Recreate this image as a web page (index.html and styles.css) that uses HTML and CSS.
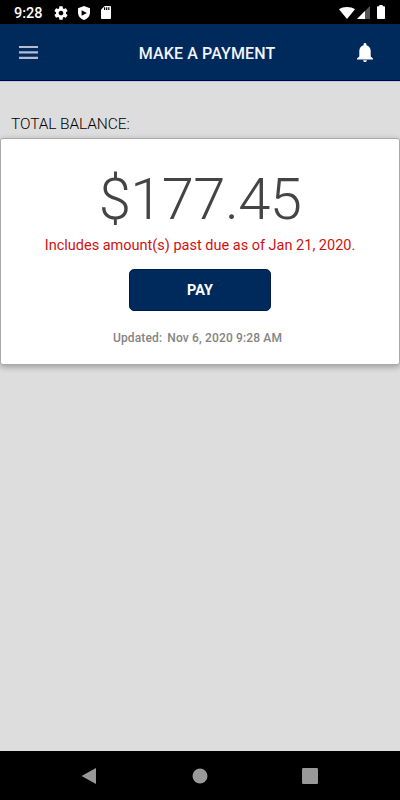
FILE: index.html
```html
<!DOCTYPE html>
<html lang="en">
<head>
    <meta charset="UTF-8">
    <meta name="viewport" content="width=device-width, initial-scale=1.0">
    <title>Make a Payment</title>
    <link rel="stylesheet" href="styles.css">
</head>
<body>

<!-- Status bar -->
<div class="status-bar">
    <span class="clock">9:28</span>
    <svg class="gear" viewBox="0 0 24 24"><path d="M19.43 12.98c.04-.32.07-.64.07-.98s-.03-.66-.07-.98l2.11-1.65c.19-.15.24-.42.12-.64l-2-3.46c-.12-.22-.39-.3-.61-.22l-2.49 1c-.52-.4-1.08-.73-1.69-.98l-.38-2.65C14.46 2.18 14.25 2 14 2h-4c-.25 0-.46.18-.49.42l-.38 2.65c-.61.25-1.17.59-1.69.98l-2.49-1c-.23-.09-.49 0-.61.22l-2 3.46c-.13.22-.07.49.12.64l2.11 1.65c-.04.32-.07.65-.07.98s.03.66.07.98l-2.11 1.65c-.19.15-.24.42-.12.64l2 3.46c.12.22.39.3.61.22l2.49-1c.52.4 1.08.73 1.69.98l.38 2.65c.03.24.24.42.49.42h4c.25 0 .46-.18.49-.42l.38-2.65c.61-.25 1.17-.59 1.69-.98l2.49 1c.23.09.49 0 .61-.22l2-3.46c.12-.22.07-.49-.12-.64l-2.11-1.65zM12 15.5c-1.93 0-3.5-1.57-3.5-3.5s1.57-3.5 3.5-3.5 3.5 1.57 3.5 3.5-1.57 3.5-3.5 3.5z"/></svg>
    <svg class="shield" viewBox="0 0 12 14"><path fill-rule="evenodd" d="M6 0 0 2.3v4.2C0 10 2.6 13 6 14c3.4-1 6-4 6-7.500V2.300zM3.600 4.200 8.900 7 3.600 9.800z"/></svg>
    <svg class="sd-card" viewBox="0 0 10 13"><path fill-rule="evenodd" d="M9 0H3.700L0 3.800V12c0 .6.400 1 1 1h8c.6 0 1-.4 1-1V1c0-.6-.4-1-1-1zM3 1.300h1.200v2.700H3zM5.100 1.300h1.200v2.700H5.100zM7.200 1.300h1.200v2.700H7.200z"/></svg>
    <div class="signals">
        <svg class="wifi" viewBox="0 0 16 12"><path d="M8 12 0 2.200C2.200.7 5 0 8 0s5.800.7 8 2.200z"/></svg>
        <svg class="cell" viewBox="0 0 13 13"><path class="dim" d="M13 0v13H0z"/><path d="M8 5v8H0z"/></svg>
        <svg class="battery" viewBox="0 0 8 14"><path d="M2.300 0h3.400v1.200H7.300c.4 0 .7.300.7.700v11.400c0 .4-.3.700-.7.700H.7c-.4 0-.7-.3-.7-.7V1.900c0-.4.300-.7.700-.7h1.600z"/></svg>
    </div>
</div>

<header>
    <svg class="menu" viewBox="0 0 19 13"><path d="M0 0h19v2H0zM0 5.300h19v2.200H0zM0 10.700h19v2.300H0z"/></svg>
    <h1>MAKE A PAYMENT</h1>
    <svg class="bell" viewBox="0 0 16 19"><path d="M8 0c.8 0 1.400.6 1.400 1.400v.8c2.600.6 4.300 2.900 4.300 5.700v5.600L16 15.400v1H0v-1l2.300-1.900V7.900c0-2.800 1.700-5.100 4.300-5.700v-.8C6.600.6 7.200 0 8 0zM6.100 17.200h3.800c0 1-.8 1.800-1.900 1.800s-1.900-.8-1.900-1.800z"/></svg>
</header>

<main>
    <h2>TOTAL BALANCE:</h2>
    <div class="balance-card">
        <div class="amount">$177.45</div>
        <p class="past-due">Includes amount(s) past due as of Jan 21, 2020.</p>
        <button class="pay">PAY</button>
        <p class="updated"><span>Updated:</span><span>Nov 6, 2020 9:28 AM</span></p>
    </div>
</main>

<!-- Android navigation -->
<nav>
    <svg viewBox="0 0 16 16"><path d="M15 0v16L.5 8z"/></svg>
    <svg viewBox="0 0 16 16"><circle cx="8" cy="8" r="7.500"/></svg>
    <svg viewBox="0 0 16 16"><rect width="16" height="16" rx="1.200"/></svg>
</nav>

</body>
</html>
```
FILE: styles.css
```css
* {
    margin: 0;
    padding: 0;
    box-sizing: border-box;
}
body {
    display: flex;
    flex-direction: column;
    height: 100vh;
    font-family: Roboto, sans-serif;
    background-color: #dddddd;
}
svg {
    display: block;
    flex: none;
    fill: white;
}

/* Status bar */
.status-bar {
    display: flex;
    align-items: center;
    height: 24px;
    padding: 1px 14px 0;
    background-color: black;
    color: white;
}
.clock {
    width: 39px;
    font-size: 14.5px;
    font-weight: 500;
    line-height: 23px;
    padding-top: 1px;
}
.gear {
    width: 16px;
    height: 16px;
}
.shield {
    width: 12px;
    height: 14px;
    margin-left: 9px;
}
.sd-card {
    width: 10px;
    height: 13px;
    margin-left: 11px;
}
.signals {
    display: flex;
    margin-left: auto;
    margin-right: 1px;
}
.wifi {
    width: 16px;
    height: 12px;
    margin-top: 1px;
}
.cell {
    width: 13px;
    height: 13px;
    margin-left: 2px;
}
.cell .dim {
    fill: #555555;
}
.battery {
    width: 8px;
    height: 14px;
    margin-left: 7px;
    margin-top: -1px;
}

/* Page header */
header {
    display: flex;
    align-items: center;
    justify-content: space-between;
    height: 57px;
    padding: 0 27px 0 19px;
    background-color: #002a5c;
    border-bottom: 1px solid #000050;
    box-shadow: 0 1px 0 #c4c4dc;
}
.menu {
    width: 19px;
    height: 13px;
    fill: #b5bdd3;
}
header h1 {
    margin-left: 19px;
    margin-top: 2px;
    font-size: 16px;
    font-weight: 500;
    letter-spacing: 0.12px;
    color: #f2f4f8;
}
.bell {
    width: 16px;
    height: 19px;
    margin-top: 1px;
}

/* Balance */
main {
    flex: 1;
    padding-top: 34px;
}
main h2 {
    height: 23px;
    padding-left: 11px;
    font-size: 15.5px;
    font-weight: 300;
    letter-spacing: -0.1px;
    line-height: 19px;
    color: #000000;
}
.balance-card {
    display: flex;
    flex-direction: column;
    align-items: center;
    height: 227px;
    background-color: white;
    border: 1px solid #aaaaaa;
    border-radius: 3px;
    box-shadow: 0 2px 6px rgba(0, 0, 0, 0.3);
}
.amount {
    margin-top: 26px;
    font-size: 58px;
    font-weight: 300;
    letter-spacing: -0.6px;
    line-height: 68px;
    color: #444444;
}
.past-due {
    margin-top: 4px;
    font-size: 14.5px;
    line-height: 18px;
    color: #d01010;
}
.pay {
    width: 142px;
    height: 42px;
    margin-top: 14px;
    background-color: #002a5c;
    border: 1px solid #001c48;
    border-radius: 5px;
    font-family: inherit;
    font-size: 14.4px;
    font-weight: 700;
    color: white;
}
.updated {
    display: flex;
    gap: 5px;
    margin-top: 19px;
    margin-right: 5px;
    font-size: 12px;
    font-weight: 500;
    letter-spacing: 0.15px;
    line-height: 16px;
    color: #848484;
}

/* Bottom navigation */
nav {
    display: flex;
    justify-content: space-between;
    align-items: center;
    height: 49px;
    padding: 0 82px 0 81px;
    background-color: black;
}
nav svg {
    width: 16px;
    height: 16px;
    fill: #999999;
}
```
